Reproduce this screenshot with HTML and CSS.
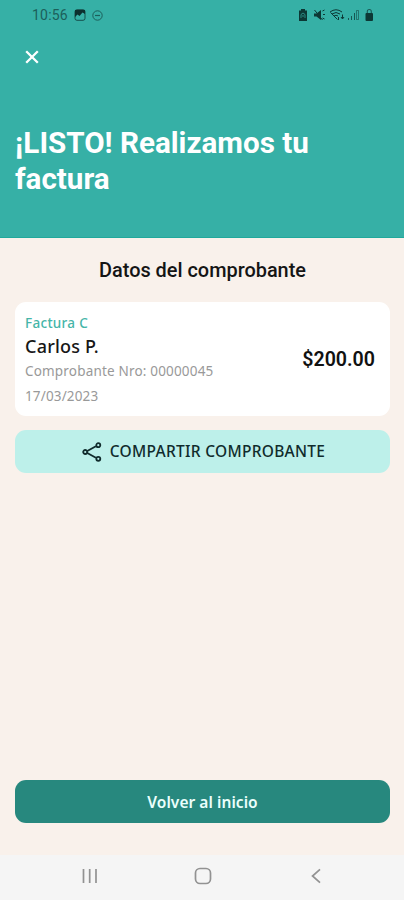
FILE: index.html
```html
<!DOCTYPE html>
<html lang="es">
<head>
<meta charset="utf-8">
<meta name="viewport" content="width=device-width, initial-scale=1">
<title>Factura realizada</title>
<link rel="stylesheet" href="styles.css">
</head>
<body>
<div class="screen">
  <header class="header">
    <div class="status">
      <div class="status-left">
        <span class="clock">10:56</span>
        <svg class="picture-icon" width="12" height="12" viewBox="0 0 12 12"><rect x="1" y=".7" width="10" height="10.600" rx="2" fill="none" stroke="currentColor" stroke-width="1" opacity=".75"/><path d="M1 1h10v4L8.500 3.500 5.500 7 3.500 5.500 1 8z" fill="currentColor"/></svg>
        <svg class="dnd-icon" width="11" height="11" viewBox="0 0 11 11" fill="none" stroke="currentColor"><circle cx="5.500" cy="5.500" r="4.700"/><path d="M3 5.500h5" stroke-width="1.200"/></svg>
      </div>
      <svg class="status-right" width="78" height="14" viewBox="0 0 78 14" fill="none" stroke="currentColor">
        <path d="M4 1h4v1.500h2V13H2V2.500h2z" fill="currentColor" stroke="none"/>
        <path d="M4 10V6.500l2-1.500 2 1.500V10M5 8h2" stroke="#36b0a6" stroke-width=".7"/>
        <path d="M17 5.500h2.500L24 2v10l-4.500-3.500H17z" fill="currentColor" stroke="none"/>
        <path d="M17.500 2l8 10M25.500 3l2-1M26 6.500h2M25.500 10l2 1"/>
        <path d="M33 4q6-4.500 12 0M35 6q4-3 8 0M37 8q2-1.500 4 0M33.500 4.500l7 7"/>
        <path d="M45.500 6.500v4m-1.500-1.500l1.500 2 1.500-2M41.500 12v-3"/>
        <path d="M51.500 12v-2M54.500 12V8M57.500 12V5" opacity=".75"/><path d="M59.500 11.500V2.500h2v9z" opacity=".5"/>
        <rect x="68.500" y="5" width="7.500" height="8" rx="1" fill="currentColor" stroke="none"/><path d="M70.300 5V3.500a2 2 0 0 1 4 0V5" stroke-width="1.100" opacity=".7"/>
      </svg>
    </div>
    <svg class="close" width="14" height="14" viewBox="0 0 14 14"><path d="M1.200 1.200l11.600 11.600M12.800 1.200L1.200 12.800"/></svg>
    <h1 class="title">¡LISTO! Realizamos tu<br>factura</h1>
  </header>
  <main class="content">
    <h2 class="subtitle">Datos del comprobante</h2>
    <section class="card">
      <div class="details">
        <span class="kind">Factura C</span>
        <span class="client">Carlos P.</span>
        <span class="number">Comprobante Nro: 00000045</span>
        <span class="date">17/03/2023</span>
      </div>
      <span class="amount">$200.00</span>
    </section>
    <button class="share">
      <svg width="20" height="20" viewBox="0 0 20 20" fill="none" stroke="currentColor" stroke-width="1.800"><path d="M5.300 9l8.600-4.800M5.300 11l8.600 4.800"/><circle cx="3.200" cy="10" r="2"/><circle cx="16.300" cy="3.200" r="2"/><circle cx="16.300" cy="16.800" r="2"/></svg>
      <span class="share-label">COMPARTIR COMPROBANTE</span>
    </button>
    <button class="home"><span>Volver al inicio</span></button>
  </main>
  <nav class="navbar">
    <svg width="16" height="16" viewBox="0 0 16 16"><path d="M1.500 1v14M7.700 1v14M14 1v14"/></svg>
    <svg width="18" height="18" viewBox="0 0 18 18"><rect x="1.500" y="1.500" width="15" height="15" rx="4.500"/></svg>
    <svg width="16" height="16" viewBox="0 0 16 16"><path d="M12 1.300L4.500 8l7.500 6.700"/></svg>
  </nav>
</div>
</body>
</html>
```
FILE: styles.css
```css
* { box-sizing: border-box; }
body { margin: 0; }
.screen {
  width: 404px;
  height: 900px;
  display: flex;
  flex-direction: column;
  background: #f9f1eb;
  font-family: "Noto Sans", sans-serif;
}
.header { height: 238px; background: #36b0a6; border-bottom: 1px solid #20a99c; }
.status {
  height: 30px;
  padding: 0 29px 0 32px;
  display: flex;
  align-items: center;
  justify-content: space-between;
  color: #1c5f5a;
}
.status-left { display: flex; align-items: center; }
.clock { font: 400 14px/20px Roboto, sans-serif; width: 42px; letter-spacing: .2px; }
.picture-icon { color: #0c302f; }
.dnd-icon { margin-left: 6px; }
.status-right { color: #0c3835; }
.close {
  display: block;
  margin: 20px 0 0 25px;
  stroke: #fff;
  stroke-width: 2.3;
}
.title {
  margin: 61px 0 0 15px;
  font: 700 29.6px/36px Roboto, sans-serif;
  color: #fff;
}
.content {
  flex: 1;
  padding: 0 14px 32px 15px;
  display: flex;
  flex-direction: column;
}
.subtitle {
  margin: 20px 0 19px;
  font: 500 19.9px/25px Roboto, sans-serif;
  text-align: center;
  color: #151515;
}
.card {
  height: 114px;
  padding: 11px 15px 0 10px;
  display: flex;
  justify-content: space-between;
  background: #fff;
  border-radius: 11px;
}
.details { display: flex; flex-direction: column; white-space: nowrap; }
.kind { font-size: 13.5px; line-height: 20px; font-weight: 500; letter-spacing: .3px; color: #45b5a8; }
.client { font-size: 18px; line-height: 27px; font-weight: 500; letter-spacing: .2px; color: #171717; }
.number { font-size: 13.5px; line-height: 22px; letter-spacing: .18px; color: #999; }
.date { font-size: 13.5px; line-height: 28px; letter-spacing: .15px; color: #999; }
.amount { margin-top: 35px; font: 600 19.6px/24px Roboto, sans-serif; color: #111; }
button { border: 0; padding: 0; font-family: inherit; }
.share {
  height: 43px;
  margin-top: 14px;
  padding-left: 2px;
  display: flex;
  align-items: center;
  justify-content: center;
  gap: 8px;
  border-radius: 11px;
  background: #bdf0ea;
  color: #102b2c;
}
.share-label { font-size: 15.5px; line-height: 21px; font-weight: 500; letter-spacing: .28px; }
.home {
  height: 43px;
  margin-top: auto;
  border-radius: 11px;
  background: #27887e;
  color: #ebfffc;
  font-size: 15.5px;
  font-weight: 600;
  letter-spacing: .05px;
}
.navbar {
  height: 45px;
  padding: 0 80px 3px 82px;
  display: flex;
  align-items: center;
  justify-content: space-between;
  background: #f5f5f5;
}
.navbar svg { fill: none; stroke: #929292; stroke-width: 1.7; }
```
